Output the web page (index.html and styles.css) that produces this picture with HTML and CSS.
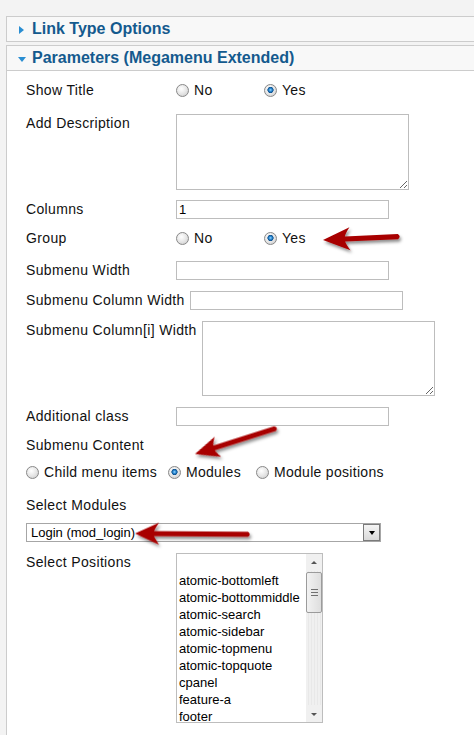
FILE: index.html
```html
<!DOCTYPE html>
<html lang="en">
<head>
    <meta charset="UTF-8">
    <title>Menu Item - Parameters</title>
    <link rel="stylesheet" href="styles.css">
</head>
<body>
    <div class="pane">
        <h3 class="pane-title"><span class="toggle closed"></span>Link Type Options</h3>
    </div>

    <div class="pane">
        <h3 class="pane-title"><span class="toggle open"></span>Parameters (Megamenu Extended)</h3>
        <div class="params">
            <div class="row radio-row mb-13">
                <label class="key">Show Title</label>
                <label class="opt"><input type="radio" name="show_title">No</label>
                <label class="opt"><input type="radio" name="show_title" checked>Yes</label>
            </div>
            <div class="row mb-10">
                <label class="key">Add Description</label>
                <textarea class="text-area"></textarea>
            </div>
            <div class="row mb-8">
                <label class="key">Columns</label>
                <input class="text-input" type="text" value="1">
            </div>
            <div class="row radio-row mb-12">
                <label class="key">Group</label>
                <label class="opt"><input type="radio" name="group">No</label>
                <label class="opt"><input type="radio" name="group" checked>Yes</label>
            </div>
            <div class="row">
                <label class="key">Submenu Width</label>
                <input class="text-input" type="text">
            </div>
            <div class="row">
                <label class="key">Submenu Column Width</label>
                <input class="text-input" type="text">
            </div>
            <div class="row">
                <label class="key">Submenu Column[i] Width</label>
                <textarea class="text-area short"></textarea>
            </div>
            <div class="row mb-10">
                <label class="key">Additional class</label>
                <input class="text-input" type="text">
            </div>
            <div class="row mb-6">
                <label class="key">Submenu Content</label>
            </div>
            <div class="row radio-row mb-13">
                <label class="opt"><input type="radio" name="content">Child menu items</label>
                <label class="opt"><input type="radio" name="content" checked>Modules</label>
                <label class="opt"><input type="radio" name="content">Module positions</label>
            </div>
            <div class="row mb-8">
                <label class="key">Select Modules</label>
            </div>
            <div class="row">
                <div class="combo">
                    <span class="combo-text">Login (mod_login)</span>
                    <span class="combo-btn"><span class="tri-down"></span></span>
                </div>
            </div>
            <div class="row">
                <label class="key">Select Positions</label>
                <div class="listbox">
                    <ul class="list-items">
                        <li>&nbsp;</li>
                        <li>atomic-bottomleft</li>
                        <li>atomic-bottommiddle</li>
                        <li>atomic-search</li>
                        <li>atomic-sidebar</li>
                        <li>atomic-topmenu</li>
                        <li>atomic-topquote</li>
                        <li>cpanel</li>
                        <li>feature-a</li>
                        <li>footer</li>
                    </ul>
                    <div class="scrollbar">
                        <span class="sb-arrow"><span class="tri-up"></span></span>
                        <span class="sb-thumb"><span class="grip"></span></span>
                        <span class="sb-track"></span>
                        <span class="sb-arrow"><span class="tri-down small"></span></span>
                    </div>
                </div>
            </div>
        </div>
    </div>

    <!-- red callout arrows drawn over the form -->
    <svg class="arrows" width="474" height="735" viewBox="0 0 474 735">
        <defs>
            <filter id="shadow" x="-20%" y="-50%" width="140%" height="200%">
                <feDropShadow dx="1.5" dy="2.5" stdDeviation="1.6" flood-color="#000" flood-opacity="0.45"/>
            </filter>
        </defs>
        <g filter="url(#shadow)" fill="#a80000">
            <path transform="translate(323,240) rotate(-2.6)" d="M0,0 L27,-11.5 Q23,-6 22,-2.6 L75,-2.6 Q78.5,0 75,2.6 L22,2.6 Q23,6 27,11.5 Z"/>
            <path transform="translate(195,454) rotate(-17.6)" d="M0,0 L24,-10.5 Q20.5,-5 20,-2.6 L84,-2.6 Q87.5,0 84,2.6 L20,2.6 Q20.5,5 24,10.5 Z"/>
            <path transform="translate(135,533.5) rotate(0.4)" d="M0,0 L24,-11 Q20,-5 19,-2.6 L113,-2.6 Q116.5,0 113,2.6 L19,2.6 Q20,5 24,11 Z"/>
        </g>
    </svg>
</body>
</html>
```

FILE: styles.css
```css
body {
    font-family: "Liberation Sans", Arial, sans-serif;
    font-size: 14px;
    color: #111;
    margin: 0;
    padding: 16px 0 0 6px;
    background-color: #f3f3f3;
    position: relative;
    overflow: hidden;
    height: 735px;
    box-sizing: border-box;
}
.pane {
    border: 1px solid #cccccc;
    border-right: none;
    background: #ffffff;
    margin-bottom: 3px;
}
.pane-title {
    display: flex;
    align-items: center;
    height: 24px;
    margin: 0;
    padding-left: 11px;
    background: #f8f8f8;
    color: #145a8e;
    font-size: 16px;
    font-weight: bold;
}
.pane + .pane .pane-title {
    border-bottom: 1px solid #cccccc;
}
.toggle {
    width: 14px;
    height: 8px;
    position: relative;
    top: 1px;
}
.toggle.closed::before {
    content: "";
    display: block;
    margin-left: 1px;
    border-left: 5px solid #2a8ed2;
    border-top: 4px solid transparent;
    border-bottom: 4px solid transparent;
}
.toggle.open::before {
    content: "";
    display: block;
    margin-top: 2px;
    border-top: 5px solid #2a8ed2;
    border-left: 4px solid transparent;
    border-right: 4px solid transparent;
    width: 0;
}
.params {
    padding: 8px 0 12px 19px;
}
.row {
    display: flex;
    align-items: flex-start;
    margin-bottom: 11px;
}
.mb-6 { margin-bottom: 6px; }
.mb-8 { margin-bottom: 8px; }
.mb-10 { margin-bottom: 10px; }
.mb-12 { margin-bottom: 12px; }
.mb-13 { margin-bottom: 13px; }
.key {
    box-sizing: border-box;
    min-width: 150px;
    padding-right: 5px;
    line-height: 19px;
    letter-spacing: 0.35px;
    white-space: nowrap;
}
.radio-row {
    align-items: center;
    height: 22px;
}
.radio-row .key {
    line-height: 22px;
}
.opt {
    display: inline-flex;
    align-items: center;
    box-sizing: border-box;
    min-width: 88px;
    padding-right: 11px;
    letter-spacing: 0.3px;
    white-space: nowrap;
}
.opt input {
    -webkit-appearance: none;
    appearance: none;
    width: 13px;
    height: 13px;
    margin: 0 5px 0 0;
    border: 1px solid #888;
    border-radius: 50%;
    background: radial-gradient(circle at 40% 35%, #ffffff 0, #e4e4e4 55%, #c4c4c4 100%);
    flex-shrink: 0;
}
.opt input:checked {
    background: radial-gradient(circle at 50% 45%, #9fd8ff 0, #2f8fd8 1.4px, #0d4f8c 2.8px, transparent 3.4px),
                radial-gradient(circle at 40% 35%, #ffffff 0, #e4e4e4 55%, #c4c4c4 100%);
}
.text-input {
    box-sizing: border-box;
    width: 213px;
    height: 19px;
    margin: 0;
    padding: 0 2px;
    border: 1px solid #bdbdbd;
    font-family: "Liberation Sans", Arial, sans-serif;
    font-size: 13px;
    color: #000;
}
.text-area {
    box-sizing: border-box;
    width: 233px;
    height: 76px;
    margin: 0;
    padding: 2px;
    border: 1px solid #bdbdbd;
    font-family: "Liberation Sans", Arial, sans-serif;
    font-size: 13px;
}
.text-area.short {
    height: 75px;
}
.combo {
    box-sizing: border-box;
    display: flex;
    align-items: center;
    width: 355px;
    height: 19px;
    border: 1px solid #a6a6a6;
    background: #fff;
    font-size: 13px;
    color: #000;
}
.combo-text {
    flex: 1;
    padding-left: 4px;
}
.combo-btn {
    box-sizing: border-box;
    display: flex;
    align-items: center;
    justify-content: center;
    width: 17px;
    height: 17px;
    border: 1px solid #7a7a7a;
    background: linear-gradient(#f4f4f4, #d9d9d9);
}
.tri-down {
    width: 0;
    border-top: 4px solid #000;
    border-left: 3.5px solid transparent;
    border-right: 3.5px solid transparent;
    margin-top: 1px;
}
.tri-down.small {
    border-top: 3px solid #555;
    border-left: 3px solid transparent;
    border-right: 3px solid transparent;
}
.tri-up {
    width: 0;
    border-bottom: 3px solid #555;
    border-left: 3px solid transparent;
    border-right: 3px solid transparent;
}
.listbox {
    box-sizing: border-box;
    display: flex;
    width: 147px;
    height: 170px;
    border: 1px solid #bdbdbd;
    background: #fff;
    overflow: hidden;
}
.list-items {
    flex: 1;
    list-style: none;
    margin: 0;
    padding: 1px 0 0 2px;
    font-size: 13px;
    line-height: 17px;
    color: #000;
    white-space: nowrap;
    overflow: hidden;
}
.scrollbar {
    display: flex;
    flex-direction: column;
    width: 16px;
    background: repeating-linear-gradient(90deg, #f0f0f0 0, #f0f0f0 2px, #e8e8e8 2px, #e8e8e8 3px);
}
.sb-arrow {
    display: flex;
    align-items: center;
    justify-content: center;
    height: 17px;
    background: #f0f0f0;
}
.sb-thumb {
    box-sizing: border-box;
    display: flex;
    align-items: center;
    justify-content: center;
    height: 41px;
    margin: 1px 0 0;
    border: 1px solid #9b9b9b;
    border-radius: 2px;
    background: linear-gradient(90deg, #f2f2f2, #dedede);
}
.grip {
    width: 7px;
    height: 7px;
    background: repeating-linear-gradient(180deg, #707070 0, #707070 1px, transparent 1px, transparent 3px);
}
.sb-track {
    flex: 1;
}
.arrows {
    position: absolute;
    top: 0;
    left: 0;
    pointer-events: none;
}
```
